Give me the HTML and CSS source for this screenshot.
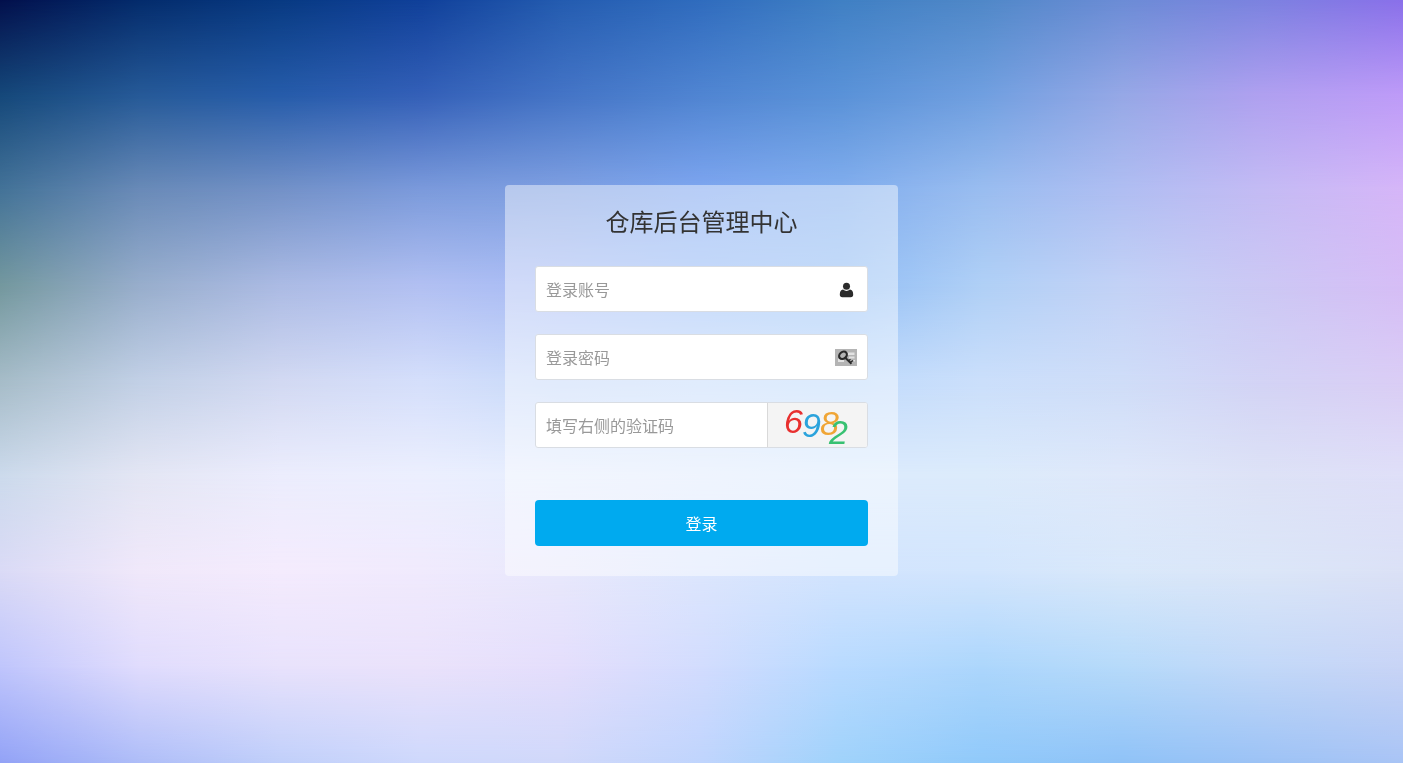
FILE: index.html
```html
<!DOCTYPE html>
<html lang="zh-CN">
<head>
    <meta charset="UTF-8">
    <meta name="viewport" content="width=device-width, initial-scale=1.0">
    <title>仓库后台管理中心</title>
    <link rel="stylesheet" href="styles.css">
</head>
<body>

    <!-- Background: each band fades in over the one above it -->
    <div class="backdrop" aria-hidden="true">
        <div class="band band-1"></div>
        <div class="band band-2"></div>
        <div class="band band-3"></div>
        <div class="band band-4"></div>
        <div class="band band-5"></div>
        <div class="band band-6"></div>
        <div class="band band-7"></div>
        <div class="band band-8"></div>
        <div class="band band-9"></div>
    </div>

    <main class="login-box">
        <h1>仓库后台管理中心</h1>

        <form id="loginForm">
            <label class="field">
                <input type="text" name="username" placeholder="登录账号" aria-label="登录账号">
                <svg class="icon" width="22" height="18" viewBox="0 0 22 18" aria-hidden="true">
                    <circle cx="11.500" cy="6.300" r="3.500" fill="#2b2b2b"/>
                    <path d="M8 9.500Q11.500 12.300 15 9.500Q18.200 10 18.200 14.500Q18.200 17.300 15.700 17.300H7.300Q4.800 17.300 4.800 14.500Q4.800 10 8 9.500Z" fill="#2b2b2b"/>
                </svg>
            </label>

            <label class="field">
                <input type="password" name="password" placeholder="登录密码" aria-label="登录密码">
                <svg class="icon" width="22" height="18" viewBox="0 0 22 18" aria-hidden="true">
                    <rect y="1" width="22" height="17" fill="#b4b4b4"/>
                    <path d="M12 4.500H19.500V7H12ZM14 8.500H19.500V10.500H14ZM3 10.500H9V14H3ZM18 12H20V13.500H18Z" fill="#e2e2e2"/>
                    <ellipse cx="8" cy="7.300" rx="4.200" ry="3.300" transform="rotate(-40 8 7.300)" fill="#b4b4b4" stroke="#2a2a2a" stroke-width="2.200"/>
                    <path d="M10 9.500L16.500 15.800" fill="none" stroke="#2a2a2a" stroke-width="2"/>
                    <path d="M13.800 12.500L15.500 11.200M15.500 14L18.200 12.600" fill="none" stroke="#2a2a2a" stroke-width="1.300"/>
                </svg>
            </label>

            <div class="field">
                <input type="text" name="captcha" placeholder="填写右侧的验证码" aria-label="填写右侧的验证码">
                <button type="button" class="captcha" aria-label="换一张验证码">
                    <svg width="99" height="44" viewBox="0 0 99 44">
                        <text x="16" y="30" fill="#e8302f">6</text>
                        <text x="34" y="34" fill="#2ba3dc">9</text>
                        <text x="52" y="32" fill="#f0a535">8</text>
                        <text x="61" y="41" fill="#38c172">2</text>
                    </svg>
                </button>
            </div>

            <button type="submit" class="submit">登录</button>
        </form>
    </main>

</body>
</html>
```
FILE: styles.css
```css
* {
    box-sizing: border-box;
}

body {
    display: flex;
    align-items: center;
    justify-content: center;
    min-height: 100vh;
    margin: 0;
    font-family: "Noto Sans CJK SC", "Liberation Sans", sans-serif;
    font-size: 16px;
    color: #333;
}

/* Background */
.backdrop {
    position: fixed;
    inset: 0;
    z-index: -1;
    display: grid;
}

/* --from / --to: where the band starts and finishes fading in */
.band {
    grid-area: 1 / 1;
    mask-image: linear-gradient(to bottom, transparent var(--from), #000 var(--to));
}

.band-1 {
    mask-image: none;
    background: linear-gradient(to right, #03104c, #042c6c, #083a82, #10409a, #245cb0, #306cbe, #4080c4, #5088c8, #6c8cd6, #7c82e0, #8a70ea);
}

.band-2 {
    --from: 0%;
    --to: 12.5%;
    background: linear-gradient(to right, #15487a, #265a98, #265caa, #3460b8, #4474c6, #5085d2, #5a92d8, #709fe0, #96a8e6, #b0a0f0, #be9bf8);
}

.band-3 {
    --from: 12.5%;
    --to: 25%;
    background: linear-gradient(to right, #447398, #6a8bb8, #7492c8, #7c9bdc, #7fa0e2, #7ea6f0, #82aeee, #9abdf0, #b0bef2, #c4bbf4, #d6b6f8);
}

.band-4 {
    --from: 25%;
    --to: 37.5%;
    background: linear-gradient(to right, #74989e, #98aecc, #acbbe4, #b2c0f2, #a8bcf6, #98bcf7, #92bef5, #b0d0f6, #c3d2f6, #ccc8f4, #d6bdf6);
}

.band-5 {
    --from: 37.5%;
    --to: 50%;
    background: linear-gradient(to right, #a6bcc8, #c2d0e6, #d2d9f2, #d5dffb, #c8daf9, #c6dcfb, #c0dbfc, #cbdffb, #cfddf8, #d3d3f5, #dacdf5);
}

.band-6 {
    --from: 50%;
    --to: 62.5%;
    background: linear-gradient(to right, #ccdaec, #e4e6f4, #ecedfd, #eceffe, #e6eefe, #e2ecfd, #dcebfd, #dcebfb, #dfe8fa, #dde2f6, #dfdff8);
}

.band-7 {
    --from: 62.5%;
    --to: 75%;
    background: linear-gradient(to right, #dadaf6, #f0e8fa, #f4ebfd, #f0eafd, #e8e8fc, #dce6fd, #d2e4fe, #d2e5fd, #d9e8fa, #dbe6f8, #dbe1f6);
}

.band-8 {
    --from: 75%;
    --to: 87.5%;
    background: linear-gradient(to right, #bfc5fc, #e0dcfd, #e8e2fc, #eae2fb, #e4defc, #d2dcfe, #b8daff, #acd6fc, #b6dafa, #c2d8f8, #c8d4f6);
}

.band-9 {
    --from: 87.5%;
    --to: 100%;
    background: linear-gradient(to right, #92a2f6, #aebdf8, #c0cffa, #ced8fc, #d0d8fa, #bfd4fd, #9fd2fb, #90c9fa, #8fc2f7, #9cc2f5, #a9c4f5);
}

/* Login box */
.login-box {
    width: 28%;
    min-width: 320px;
    margin-bottom: 2px;
    padding: 20px 30px 30px;
    background-color: rgba(255, 255, 255, 0.45);
    border-radius: 4px;
}

h1 {
    margin: 0 0 29px;
    font-size: 24px;
    font-weight: normal;
    line-height: 32px;
    text-align: center;
}

.field {
    display: flex;
    align-items: center;
    height: 46px;
    margin-bottom: 22px;
    background-color: #fff;
    border: 1px solid #d9dde3;
    border-radius: 3px;
    overflow: hidden;
}

.field input {
    flex: 1;
    min-width: 0;
    height: 44px;
    padding: 0 10px;
    border: none;
    outline: none;
    background: none;
    font: inherit;
    color: #333;
}

.field input::placeholder {
    color: #999;
    opacity: 1;
}

.icon {
    flex: none;
    margin-right: 10px;
}

.captcha {
    flex: none;
    width: 100px;
    height: 44px;
    padding: 0;
    background-color: #f4f4f4;
    border: none;
    border-left: 1px solid #d9d9d9;
    cursor: pointer;
}

.captcha svg {
    display: block;
}

.captcha text {
    font-family: "Liberation Sans", sans-serif;
    font-size: 34px;
    font-style: italic;
}

.submit {
    display: block;
    width: 100%;
    height: 46px;
    margin-top: 52px;
    background-color: #00aaef;
    color: #fff;
    border: none;
    border-radius: 4px;
    font: inherit;
    cursor: pointer;
}

.submit:hover {
    background-color: #009bdb;
}
```
